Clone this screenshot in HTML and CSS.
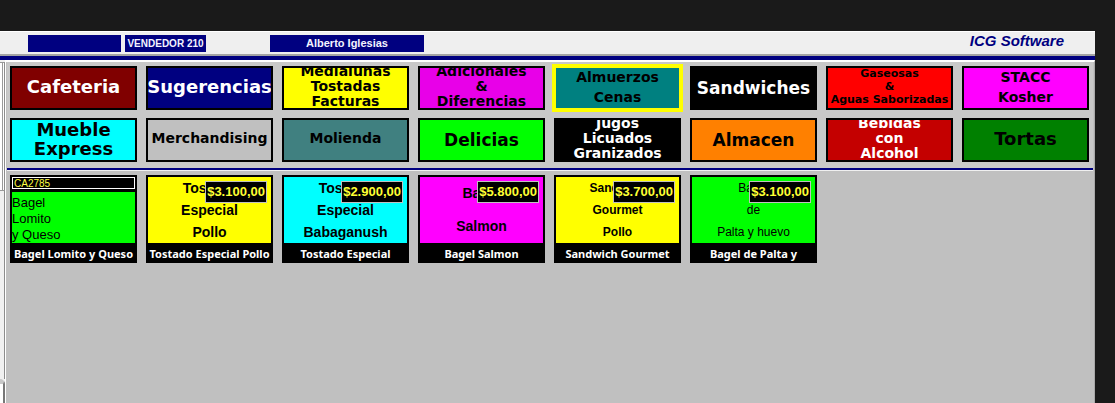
FILE: index.html
```html
<!DOCTYPE html>
<html lang="es">
<head>
<meta charset="utf-8">
<meta name="viewport" content="width=device-width, initial-scale=1">
<title>ICG Software</title>
<link rel="stylesheet" href="styles.css">
</head>
<body>
<div class="window">
  <header class="topbar">
    <span class="field field-code"></span>
    <span class="field field-seller">VENDEDOR 210</span>
    <span class="field field-name">Alberto Iglesias</span>
    <span class="brand">ICG Software</span>
  </header>
  <div class="workspace">
    <aside class="side"><div class="side-top"></div><div class="side-mid"></div><div class="side-end"></div></aside>
    <main class="panel">
      <nav class="families">
        <button class="family maroon size-l">Cafeteria</button>
        <button class="family navy size-l">Sugerencias</button>
        <button class="family yellow size-s">Medialunas<br>Tostadas<br>Facturas</button>
        <button class="family violet size-s">Adicionales<br>&amp;<br>Diferencias</button>
        <button class="family teal size-s spaced selected">Almuerzos<br>Cenas</button>
        <button class="family black size-m">Sandwiches</button>
        <button class="family red size-xs">Gaseosas<br>&amp;<br>Aguas Saborizadas</button>
        <button class="family magenta size-s spaced">STACC<br>Kosher</button>
        <button class="family cyan size-l">Mueble<br>Express</button>
        <button class="family silver size-s">Merchandising</button>
        <button class="family slate size-s">Molienda</button>
        <button class="family lime size-m">Delicias</button>
        <button class="family black size-s">Jugos<br>Licuados<br>Granizados</button>
        <button class="family orange size-m">Almacen</button>
        <button class="family crimson size-s">Bebidas<br>con<br>Alcohol</button>
        <button class="family green size-l">Tortas</button>
      </nav>
      <section class="products">
        <button class="product">
          <span class="code">CA2785</span>
          <span class="art lime art-left">Bagel<br>Lomito<br>y Queso</span>
          <span class="caption">Bagel Lomito y Queso</span>
        </button>
        <button class="product">
          <span class="art yellow">Tostado<br>Especial<br>Pollo</span>
          <span class="price">$3.100,00</span>
          <span class="caption">Tostado Especial Pollo</span>
        </button>
        <button class="product">
          <span class="art cyan">Tostado<br>Especial<br>Babaganush</span>
          <span class="price">$2.900,00</span>
          <span class="caption">Tostado Especial</span>
        </button>
        <button class="product">
          <span class="art magenta art-two">Bagel<br>Salmon</span>
          <span class="price">$5.800,00</span>
          <span class="caption">Bagel Salmon</span>
        </button>
        <button class="product">
          <span class="art yellow art-small">Sandwich<br>Gourmet<br>Pollo</span>
          <span class="price">$3.700,00</span>
          <span class="caption">Sandwich Gourmet</span>
        </button>
        <button class="product">
          <span class="art lime art-small art-light">Bagel<br>de<br>Palta y huevo</span>
          <span class="price">$3.100,00</span>
          <span class="caption">Bagel de Palta y</span>
        </button>
      </section>
    </main>
  </div>
</div>
</body>
</html>
```
FILE: styles.css
```css
* { box-sizing: border-box; }

body {
  margin: 0;
  background: #1a1a1a;
  font-family: "Liberation Sans", Arial, sans-serif;
}

.window {
  display: flex;
  flex-direction: column;
  min-height: 100vh;
  padding: 31px 20px 0 0;
}

button {
  margin: 0;
  padding: 0;
  border: 0;
  border-radius: 0;
  cursor: pointer;
}

/* Top bar */
.topbar {
  display: flex;
  align-items: center;
  height: 25px;
  padding-left: 28px;
  background: #efefef;
  border-top: 1px solid #fff;
  border-bottom: 2px solid #a4a4a4;
}

.field {
  height: 17px;
  background: #000080;
  color: #f4f4ff;
  font-size: 11px;
  font-weight: bold;
  line-height: 17px;
  text-align: center;
  white-space: nowrap;
}

.field-code { width: 93px; margin-right: 4px; }
.field-seller { width: 81px; margin-right: 64px; font-size: 10px; }
.field-name { width: 154px; }

.brand {
  margin-left: auto;
  padding: 0 31px 4px 0;
  color: #000080;
  font-size: 15px;
  font-style: italic;
  font-weight: bold;
  line-height: 16px;
}

/* Work area */
.workspace {
  display: flex;
  flex: 1;
  border-top: 4px solid #000080;
}

.side {
  display: flex;
  flex-direction: column;
  width: 6px;
  padding-top: 2px;
  background: #f0f0f0;
  border-right: 1px solid #fff;
}

.side-top, .side-mid, .side-end { border-right: 1px solid #8c8c8c; }

.side-top {
  height: 129px;
  background: linear-gradient(90deg, #fff 2px, #999 2px, #999 3px, #fff 3px);
  border-top: 1px solid #999;
  border-bottom: 1px solid #999;
}

.side-mid { flex: 1; }

.side-end {
  height: 24px;
  background: #fff;
  border-top: 5px solid #c8c8c8;
  border-right: 2px solid #777;
  border-top-right-radius: 5px;
}

.panel {
  flex: 1;
  min-width: 0;
  background: #c0c0c0;
  border-top: 2px solid #fff;
  border-right: 1px solid #a8a8a8;
}

.families, .products {
  display: grid;
  grid-template-columns: repeat(8, minmax(0, 1fr));
  column-gap: 9px;
}

.families {
  row-gap: 8px;
  margin: 0 1px;
  padding: 4px 4px 6px 3px;
  background: #c8c8c8;
  border-bottom: 2px solid #000080;
  box-shadow: 0 1px #f0f0f0;
}

.products { padding: 5px 5px 5px 4px; }

.family {
  display: flex;
  align-items: center;
  justify-content: center;
  height: 44px;
  padding-bottom: 3px;
  overflow: hidden;
  border: 2px solid #000;
  color: #000;
  font-family: "DejaVu Sans", Verdana, sans-serif;
  font-weight: bold;
  text-align: center;
  white-space: nowrap;
}

.size-l { font-size: 18px; line-height: 19px; }
.size-m { font-size: 17px; line-height: 20px; padding-bottom: 0; }
.size-s { font-size: 14px; line-height: 15px; }
.size-xs { font-size: 11px; line-height: 13px; }
.spaced { line-height: 20px; }

.selected {
  border-color: #ff0;
  outline: 2px solid #ff0;
}

/* Colours */
.maroon { background: #800000; color: #fff; }
.navy { background: #000080; color: #fff; }
.black { background: #000; color: #fff; }
.crimson { background: #c40000; color: #fff; }
.yellow { background: #ff0; }
.violet { background: #e800e8; }
.teal { background: #008080; }
.red { background: #f00; }
.magenta { background: #f0f; }
.cyan { background: #0ff; }
.silver { background: #c0c0c0; }
.slate { background: #408080; }
.lime { background: #0f0; }
.orange { background: #ff8000; }
.green { background: #008000; }

/* Products */
.product {
  position: relative;
  display: flex;
  flex-direction: column;
  height: 88px;
  padding: 2px;
  background: #000;
  color: #000;
  font-family: "Liberation Sans", Arial, sans-serif;
}

.code {
  height: 12px;
  margin-bottom: 3px;
  padding-left: 1px;
  border: 1px solid #fff;
  color: #ff4;
  font-size: 10px;
  line-height: 11px;
  text-align: left;
}

.art {
  flex: 1;
  overflow: hidden;
  font-size: 14px;
  font-weight: bold;
  line-height: 22px;
  text-align: center;
  white-space: nowrap;
}

.art-left {
  padding-top: 3px;
  font-size: 13px;
  font-weight: normal;
  line-height: 16px;
  text-align: left;
}

.art-two { line-height: 33px; }
.art-small { font-size: 12px; }
.art-light { font-weight: normal; }

.caption {
  height: 18px;
  margin-top: 2px;
  margin-bottom: -2px;
  overflow: hidden;
  color: #fff;
  font-family: "Noto Sans", sans-serif;
  font-size: 11px;
  font-weight: bold;
  line-height: 17px;
  text-align: center;
  white-space: nowrap;
}

.price {
  position: absolute;
  top: 6px;
  right: 6px;
  padding: 0 1px;
  background: #000;
  border: 1px solid #c0c0c0;
  color: #ff3;
  font-size: 13px;
  font-weight: bold;
  line-height: 20px;
}
```
